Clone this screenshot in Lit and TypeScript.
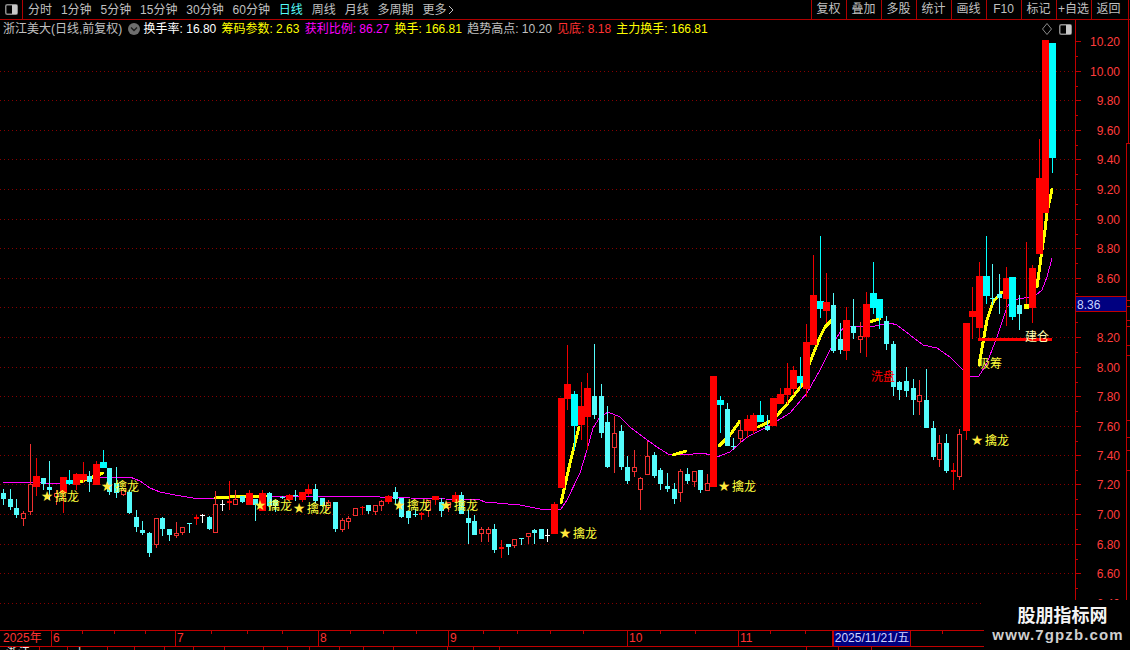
import { LitElement, html, css, svg } from 'lit';
import { customElement } from 'lit/decorators.js';

const tabs = ['分时', '1分钟', '5分钟', '15分钟', '30分钟', '60分钟', '日线', '周线', '月线', '多周期', '更多'];
const tools = ['复权', '叠加', '多股', '统计', '画线', 'F10', '标记', '+自选', '返回'];

const quotes = [
  { label: '换手率', value: '16.80', tone: 'white' },
  { label: '筹码参数', value: '2.63', tone: 'yellow' },
  { label: '获利比例', value: '86.27', tone: 'pink' },
  { label: '换手', value: '166.81', tone: 'yellow' },
  { label: '趋势高点', value: '10.20', tone: 'grey' },
  { label: '见底', value: '8.18', tone: 'red' },
  { label: '主力换手', value: '166.81', tone: 'yellow' },
];

// price scale: y of every 0.2 step
const prices = [
  ['10.20', 41], ['10.00', 71], ['9.80', 100], ['9.60', 130], ['9.40', 159], ['9.20', 189],
  ['9.00', 219], ['8.80', 248], ['8.60', 278], ['8.40', 307], ['8.20', 337], ['8.00', 367],
  ['7.80', 396], ['7.60', 426], ['7.40', 455], ['7.20', 484], ['7.00', 514], ['6.80', 544],
  ['6.60', 573], ['6.40', 603],
] as [string, number][];

// wick top, wick bottom, body top, body bottom, kind
// R solid red, r small red, h hollow red, c pale cyan, C full cyan, w white, y yellow
type Candle = [number, number, number, number, string];
const candles: Candle[] = [
  [489, 505, 493, 499, 'c'], [489, 510, 499, 507, 'c'], [499, 518, 508, 515, 'c'], [511, 526, 513, 519, 'h'],
  [444, 515, 484, 512, 'h'], [458, 496, 476, 487, 'R'], [478, 490, 478, 484, 'c'], [461, 500, 487, 490, 'c'],
  [490, 505, 493, 497, 'h'], [477, 513, 477, 493, 'R'], [470, 485, 480, 484, 'C'], [473, 490, 474, 485, 'R'],
  [462, 483, 474, 480, 'R'], [471, 492, 476, 482, 'c'], [461, 485, 464, 485, 'R'], [450, 468, 462, 468, 'C'],
  [468, 495, 468, 492, 'c'], [467, 498, 483, 493, 'c'], [488, 496, 490, 495, 'h'], [490, 514, 492, 513, 'c'],
  [510, 532, 517, 527, 'c'], [521, 535, 530, 533, 'c'], [532, 557, 533, 553, 'c'], [518, 548, 518, 545, 'h'],
  [517, 536, 518, 529, 'c'], [529, 541, 529, 535, 'c'], [522, 538, 533, 536, 'h'], [527, 535, 527, 533, 'h'],
  [523, 533, 523, 524, 'c'], [515, 525, 517, 519, 'r'], [514, 523, 515, 516, 'w'], [516, 530, 517, 529, 'c'],
  [491, 533, 504, 533, 'h'], [500, 511, 504, 505, 'w'], [481, 510, 501, 503, 'r'], [490, 505, 499, 505, 'h'],
  [496, 503, 496, 502, 'c'], [490, 505, 493, 505, 'R'], [499, 521, 499, 505, 'c'], [490, 511, 493, 511, 'R'],
  [492, 510, 493, 506, 'c'], [500, 512, 500, 506, 'c'], [496, 499, 497, 498, 'c'], [494, 501, 495, 500, 'R'],
  [490, 501, 495, 496, 'c'], [492, 502, 492, 500, 'R'], [484, 496, 489, 494, 'R'], [484, 503, 489, 501, 'c'],
  [498, 507, 498, 506, 'c'], [500, 510, 502, 508, 'h'], [502, 532, 502, 529, 'c'], [518, 532, 520, 530, 'h'],
  [516, 529, 518, 522, 'h'], [508, 516, 508, 516, 'h'], [506, 515, 507, 508, 'r'], [505, 514, 505, 511, 'c'],
  [505, 515, 505, 512, 'h'], [500, 511, 501, 506, 'h'], [495, 504, 496, 502, 'R'], [487, 504, 492, 499, 'c'],
  [498, 518, 498, 517, 'c'], [511, 524, 511, 518, 'c'], [509, 517, 514, 515, 'c'], [512, 520, 513, 515, 'r'],
  [500, 517, 500, 511, 'h'], [496, 505, 496, 500, 'R'], [498, 517, 502, 511, 'c'], [502, 512, 502, 508, 'h'],
  [492, 503, 495, 502, 'R'], [492, 514, 495, 514, 'c'], [510, 544, 518, 523, 'c'], [515, 535, 521, 535, 'c'],
  [527, 542, 529, 534, 'h'], [527, 542, 529, 534, 'h'], [524, 553, 529, 550, 'c'], [540, 558, 547, 549, 'r'],
  [544, 555, 544, 547, 'c'], [539, 548, 539, 546, 'h'], [538, 545, 538, 539, 'c'], [533, 544, 533, 537, 'h'],
  [529, 544, 530, 533, 'c'], [529, 539, 529, 539, 'c'], [529, 542, 535, 536, 'w'], [502, 534, 504, 534, 'R'],
  [398, 488, 398, 488, 'R'], [345, 410, 384, 399, 'R'], [391, 450, 394, 426, 'C'], [382, 440, 406, 425, 'R'],
  [373, 450, 388, 417, 'R'], [344, 419, 396, 415, 'c'], [384, 438, 396, 433, 'c'], [406, 468, 422, 467, 'c'],
  [416, 473, 433, 448, 'h'], [425, 470, 431, 467, 'c'], [456, 484, 467, 481, 'c'], [450, 477, 467, 472, 'h'],
  [477, 510, 478, 490, 'h'], [441, 475, 456, 475, 'h'], [452, 478, 455, 476, 'c'], [468, 490, 470, 484, 'c'],
  [473, 492, 486, 489, 'c'], [483, 504, 489, 499, 'c'], [469, 502, 471, 493, 'h'], [468, 484, 474, 481, 'c'],
  [471, 487, 471, 482, 'h'], [470, 493, 470, 490, 'c'], [474, 491, 483, 491, 'h'], [376, 487, 376, 487, 'R'],
  [396, 433, 400, 405, 'C'], [403, 446, 409, 446, 'c'], [438, 450, 446, 447, 'c'], [420, 443, 430, 439, 'h'],
  [415, 438, 419, 431, 'R'], [413, 434, 415, 431, 'R'], [401, 422, 415, 422, 'C'], [415, 431, 426, 430, 'c'],
  [398, 426, 398, 426, 'R'], [388, 404, 394, 404, 'R'], [363, 404, 388, 395, 'R'], [366, 395, 370, 389, 'R'],
  [357, 389, 376, 383, 'C'], [324, 397, 342, 389, 'R'], [255, 345, 295, 345, 'R'], [236, 318, 301, 309, 'C'],
  [273, 323, 302, 311, 'R'], [293, 353, 305, 351, 'c'], [323, 354, 339, 350, 'c'], [307, 360, 320, 351, 'R'],
  [299, 339, 326, 333, 'c'], [322, 353, 336, 340, 'h'], [292, 357, 304, 337, 'R'], [262, 314, 293, 308, 'C'],
  [299, 329, 299, 318, 'C'], [316, 350, 321, 344, 'c'], [341, 396, 344, 387, 'c'], [381, 400, 382, 390, 'c'],
  [367, 397, 381, 391, 'c'], [379, 415, 388, 400, 'c'], [380, 415, 395, 402, 'h'], [369, 428, 400, 428, 'c'],
  [421, 460, 428, 457, 'c'], [435, 467, 443, 460, 'h'], [434, 473, 443, 471, 'c'], [463, 490, 470, 472, 'r'],
  [429, 480, 434, 477, 'h'], [323, 440, 323, 431, 'R'], [287, 339, 311, 317, 'R'], [262, 339, 276, 328, 'R'],
  [236, 304, 276, 296, 'C'], [264, 305, 298, 299, 'c'], [274, 314, 294, 298, 'c'], [267, 326, 278, 299, 'R'],
  [277, 320, 277, 317, 'C'], [295, 330, 305, 314, 'c'], [242, 304, 304, 309, 'y'], [265, 323, 268, 308, 'R'],
  [139, 254, 178, 254, 'R'], [40, 213, 40, 213, 'R'], [43, 173, 43, 158, 'C'],
];

const average =
  '3,482 30,482 60,484 80,481 103,477 130,477 140,481 150,488 160,492 175,495 193,498 215,498 280,496 350,496 ' +
  '410,498 480,500 485,502 520,505 545,510 558,509 561,509 567,500 580,473 587,450 593,428 600,417 608,412 620,417 ' +
  '630,427 643,437 657,447 668,454 683,455 703,453 717,457 730,452 747,437 767,427 790,413 807,393 820,370 835,340 ' +
  '843,328 855,326 870,327 890,323 897,325 910,335 923,345 937,348 950,357 962,369 970,376 979,376 987,363 997,337 ' +
  '1007,307 1013,300 1035,296 1042,290 1047,277 1052,258';

const trends = [
  '80,482 90,478 103,473',
  '215,498 230,497 267,496',
  '561,503 570,463 579,427',
  '673,455 686,451',
  '719,446 730,435 740,421',
  '758,427 773,420 788,403 802,385 810,362 820,337 825,327 832,320',
  '869,322 880,319',
  '979,365 987,320 993,302 1002,292',
  '1037,287 1042,250 1045,230 1047,213 1052,189',
];

const stars = [
  [47, 496], [107, 486], [260, 505], [299, 508], [399, 505], [446, 505], [565, 533], [724, 486], [977, 440],
];

const months = [
  ['2025年', 52], ['6', 124], ['7', 143], ['8', 130], ['9', 179], ['10', 111], ['11', 94],
] as [string, number][];
const dayTicks = [82, 114, 145, 211, 247, 282, 350, 383, 416, 483, 517, 550, 583, 660, 695, 770, 805, 942];
const statusCells = [
  ['浙江', 40], ['', 28], ['上', 40], ['', 27], ['', 30], ['', 29], ['', 31], ['', 39], ['', 24], ['', 22],
  ['', 30], ['', 24], ['', 30], ['', 54], ['', 26], ['', 26], ['', 307], ['', 32], ['', 33],
] as [string, number][];
const rightTicks = [143, 300, 306, 320, 326, 345, 355, 420, 437, 450, 470];

const panelIcon = html`<svg width="13" height="11" viewBox="0 0 13 11">
  <rect x="0.75" y="0.75" width="11.5" height="9.5" rx="1.5" fill="none" stroke="#8c8c8c" stroke-width="1.5"></rect>
  <rect x="7" y="1" width="5" height="9" fill="#c8c8c8"></rect>
</svg>`;

@customElement('app-root')
export class AppRoot extends LitElement {
  static styles = css`
    :host {
      display: block;
      position: relative;
      width: 1130px;
      height: 650px;
      overflow: hidden;
      background: #000;
      color: #c0c0c0;
      font: 12px/16px 'Liberation Sans', 'Noto Sans CJK SC', sans-serif;
    }
    .toolbar {
      display: flex;
      align-items: stretch;
      height: 20px;
      box-sizing: border-box;
      border-bottom: 1px solid #b00000;
    }
    .menu-icon {
      width: 23px;
      box-sizing: border-box;
      border-right: 1px solid #b00000;
      display: flex;
      align-items: center;
      justify-content: center;
    }
    .tabs {
      display: flex;
      align-items: center;
      gap: 8.9px;
      padding-left: 5px;
    }
    .tab.active {
      color: #54fcfc;
    }
    .more {
      display: flex;
      align-items: center;
      gap: 2px;
    }
    .tools {
      display: flex;
      margin-left: auto;
      margin-right: 1px;
    }
    .tool {
      width: 35px;
      box-sizing: border-box;
      border-left: 1px solid #b00000;
      padding-right: 1px;
      text-align: center;
      line-height: 19px;
    }
    .tool:last-child {
      width: 38px;
      padding-right: 3px;
      border-right: 1px solid #b00000;
    }
    .main {
      display: flex;
      height: 610px;
    }
    .left {
      width: 1075px;
      flex: none;
    }
    .info {
      display: flex;
      align-items: center;
      gap: 5.2px;
      height: 18px;
      padding: 0 3px;
      white-space: nowrap;
    }
    .caret {
      display: block;
      margin: 0 -1.2px 0 0;
    }
    .white { color: #fff; }
    .yellow { color: #ffff00; }
    .pink { color: #ff00ff; }
    .grey { color: #c0c0c0; }
    .red { color: #ff3232; }
    .corner {
      margin-left: auto;
      display: flex;
      align-items: center;
      gap: 7px;
    }
    .chart,
    .axis {
      display: block;
    }
    .chart rect,
    .chart line,
    .chart polyline,
    .axis line {
      shape-rendering: crispEdges;
    }
    .grid {
      stroke: #860000;
      stroke-width: 1;
      stroke-dasharray: 1 3;
    }
    .average {
      fill: none;
      stroke: #ff00ff;
      stroke-width: 1;
    }
    .trend {
      fill: none;
      stroke: #ffff00;
      stroke-width: 3;
      stroke-linecap: round;
      stroke-linejoin: round;
    }
    .line-R, .line-r, .line-y { stroke: #f00000; }
    .line-h { stroke: #f03030; }
    .line-c { stroke: #54fcfc; }
    .line-C { stroke: #00ffff; }
    .line-w { stroke: #fff; }
    .body-R, .body-r { fill: #ff0000; }
    .body-h { fill: #000; stroke: #f03030; }
    .body-c { fill: #54fcfc; }
    .body-C { fill: #00ffff; }
    .body-w { fill: #fff; }
    .body-y { fill: #ffff00; }
    .support {
      fill: #ff0000;
    }
    .star {
      fill: #ffe83c;
      font: 14px 'DejaVu Sans', sans-serif;
    }
    .mark {
      font: 12px 'Noto Sans CJK SC', sans-serif;
    }
    .mark-yellow { fill: #ffff3c; }
    .mark-red { fill: #ff0000; }
    .mark-pale { fill: #ffffb0; }
    .scale {
      fill: #ff3c3c;
      font: 12px 'Liberation Sans', sans-serif;
      text-anchor: end;
    }
    .axis-line {
      stroke: #c00000;
      stroke-width: 1;
    }
    .last-box {
      fill: #000080;
      stroke: #c00000;
      stroke-width: 1;
      shape-rendering: crispEdges;
    }
    .last-text {
      fill: #c8d4ff;
      font: 12px 'Liberation Sans', sans-serif;
    }
    .dates {
      position: relative;
      display: flex;
      height: 17px;
      box-sizing: border-box;
      border-top: 1px solid #c00000;
      border-bottom: 1px solid #c00000;
      color: #ff3232;
      line-height: 15px;
    }
    .month {
      box-sizing: border-box;
      padding-left: 1px;
      border-right: 1px solid #c00000;
    }
    .month:first-child {
      padding-left: 3px;
    }
    .picked {
      width: 78px;
      box-sizing: border-box;
      background: #000080;
      border: 1px solid #c00000;
      border-width: 0 1px;
      color: #d0d4ff;
      text-align: center;
      white-space: nowrap;
    }
    .day-ticks {
      position: absolute;
      left: 0;
      top: 0;
    }
    .day-tick {
      stroke: #c00000;
      shape-rendering: crispEdges;
    }
    .status {
      display: flex;
      height: 3px;
      overflow: hidden;
      color: #e8e8e8;
    }
    .cell {
      box-sizing: border-box;
      flex: none;
      height: 3px;
      padding-left: 6px;
      border-right: 1px solid #c00000;
      line-height: 12px;
      overflow: hidden;
    }
    .watermark {
      position: absolute;
      left: 984px;
      top: 600px;
      right: 0;
      bottom: 0;
      background: #000;
      text-align: center;
    }
    .site {
      margin-top: 3px;
      padding-left: 11px;
      color: #f4f4f4;
      font: bold 18px/22px 'Noto Sans CJK SC', sans-serif;
    }
    .url {
      margin-top: 1px;
      padding-left: 2px;
      color: #cfcfcf;
      font: bold 15px/18px 'Liberation Sans', sans-serif;
      letter-spacing: 1.1px;
    }
  `;

  renderChart() {
    return svg`
      ${prices.slice(1).map(([, y]) => svg`<line class="grid" x1="0" x2="1075" y1=${y + 0.5} y2=${y + 0.5}></line>`)}
      <polyline class="average" points=${average}></polyline>
      ${trends.map((p) => svg`<polyline class="trend" points=${p}></polyline>`)}
      ${candles.map(([wt, wb, bt, bb, kind], i) => {
        const x = Math.round(3 + i * 6.64);
        const line = svg`<line class="line-${kind}" x1=${x + 0.5} x2=${x + 0.5} y1=${wt} y2=${wb}></line>`;
        if (kind === 'h') {
          return svg`${line}<rect class="body-h" x=${x - 1.5} y=${bt + 0.5} width="4" height=${Math.max(bb - bt - 1, 1)}></rect>`;
        }
        const w = kind === 'R' || kind === 'C' ? 7 : 5;
        return svg`${line}<rect class="body-${kind}" x=${x - (w - 1) / 2} y=${bt} width=${w} height=${Math.max(bb - bt, 1)}></rect>`;
      })}
      <rect class="support" x="978" y="338" width="74" height="3"></rect>
      ${stars.map(([x, y]) => svg`
        <text class="star" x=${x} y=${y + 5} text-anchor="middle">★</text>
        <text class="mark mark-yellow" x=${x + 8} y=${y + 5}>擒龙</text>`)}
      <text class="mark mark-red" x="871" y="381">洗盘</text>
      <text class="mark mark-yellow" x="978" y="368">吸筹</text>
      <text class="mark mark-pale" x="1025" y="341">建仓</text>
    `;
  }

  renderAxis() {
    return svg`
      <line class="axis-line" x1="1075.5" x2="1075.5" y1="20" y2="630"></line>
      <line class="axis-line" x1="1128.5" x2="1128.5" y1="20" y2="143"></line>
      <line class="axis-line" x1="1126.5" x2="1126.5" y1="143" y2="600"></line>
      ${prices.map(([label, y]) => svg`
        <line class="axis-line" x1="1076" x2="1081" y1=${y + 0.5} y2=${y + 0.5}></line>
        <line class="axis-line" x1="1076" x2="1078" y1=${y + 15.5} y2=${y + 15.5}></line>
        ${label === '8.40' ? '' : svg`<text class="scale" x="1120" y=${y + 4.5}>${label}</text>`}`)}
      ${rightTicks.map((y) => svg`<line class="axis-line" x1="1127" x2="1130" y1=${y + 0.5} y2=${y + 0.5}></line>`)}
      <rect class="last-box" x="1075.5" y="296.5" width="51" height="15"></rect>
      <text class="last-text" x="1077" y="309">8.36</text>
    `;
  }

  render () {
    return html`
      <div class="toolbar">
        <div class="menu-icon">${panelIcon}</div>
        <div class="tabs">
          ${tabs.slice(0, 10).map((t) => html`<span class="tab ${t === '日线' ? 'active' : ''}">${t}</span>`)}
          <span class="tab more">${tabs[10]}
            <svg width="6" height="10" viewBox="0 0 6 10"><path d="M1 1l4 4-4 4" fill="none" stroke="#c0c0c0"></path></svg>
          </span>
        </div>
        <div class="tools">${tools.map((t) => html`<div class="tool">${t}</div>`)}</div>
      </div>
      <div class="main">
        <div class="left">
          <div class="info">
            <span>浙江美大(日线,前复权)</span>
            <svg class="caret" width="12" height="12" viewBox="0 0 12 12">
              <circle cx="6" cy="6" r="6" fill="#6e6e6e"></circle>
              <path d="M3 4.5l3 3 3-3" fill="none" stroke="#1c1c1c" stroke-width="1.4"></path>
            </svg>
            ${quotes.map((q) => html`<span class=${q.tone}>${q.label}: ${q.value}</span>`)}
            <div class="corner">
              <svg width="10" height="12" viewBox="0 0 10 12"><path d="M5 .5L9.5 6 5 11.5.5 6z" fill="none" stroke="#8a8a8a"></path></svg>
              ${panelIcon}
            </div>
          </div>
          <svg class="chart" width="1075" height="592" viewBox="0 38 1075 592">${this.renderChart()}</svg>
        </div>
        <svg class="axis" width="55" height="610" viewBox="1075 20 55 610">${this.renderAxis()}</svg>
      </div>
      <div class="dates">
        ${months.map(([m, w]) => html`<div class="month" style="width:${w}px">${m}</div>`)}
        <div class="picked">2025/11/21/五</div>
        <svg class="day-ticks" width="1130" height="4">
          ${dayTicks.map((x) => svg`<line class="day-tick" x1=${x + 0.5} x2=${x + 0.5} y1="0" y2="3"></line>`)}
        </svg>
      </div>
      <div class="status">
        ${statusCells.map(([t, w]) => html`<div class="cell" style="width:${w}px">${t}</div>`)}
      </div>
      <div class="watermark">
        <div class="site">股朋指标网</div>
        <div class="url">www.7gpzb.com</div>
      </div>
    `;
  }
}
